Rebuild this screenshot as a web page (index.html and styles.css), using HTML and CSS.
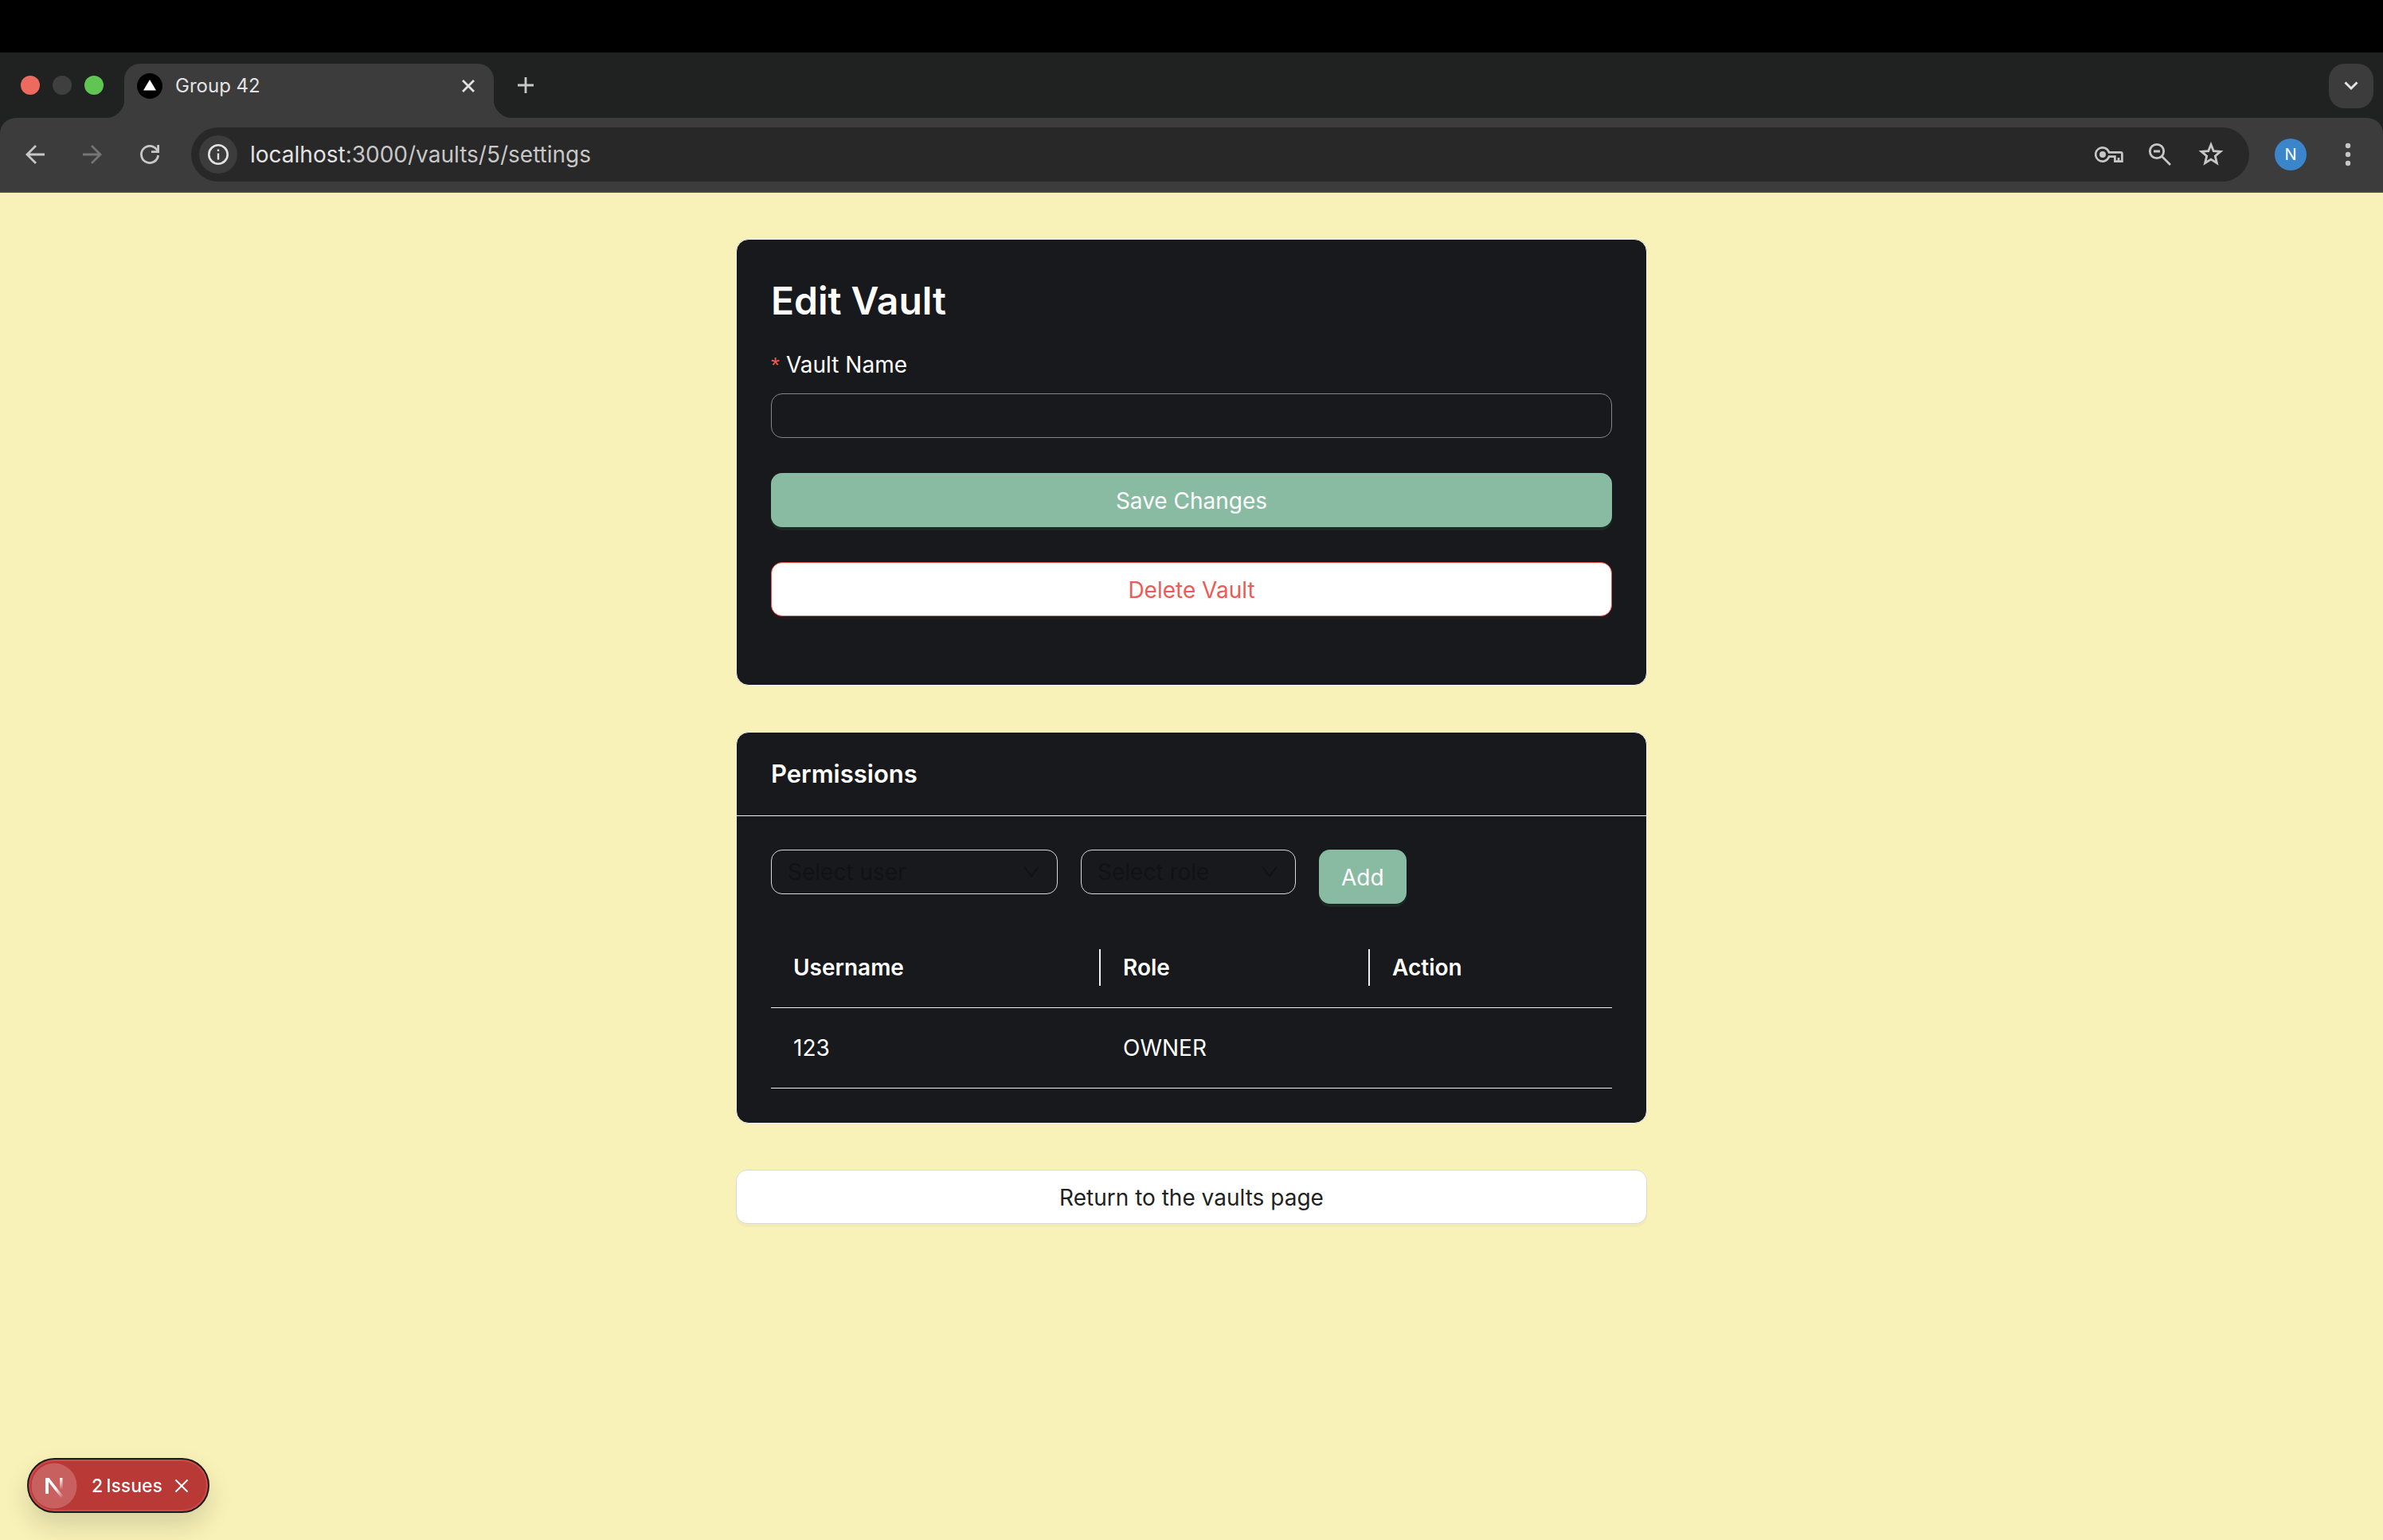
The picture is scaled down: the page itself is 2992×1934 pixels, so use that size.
FILE: index.html
```html
<!DOCTYPE html>
<html lang="en">
<head>
<meta charset="utf-8">
<title>Group 42</title>
<link rel="stylesheet" href="styles.css">
</head>
<body>
<header class="browser">
  <div class="tabstrip">
    <div class="lights"><span class="light close"></span><span class="light min"></span><span class="light max"></span></div>
    <div class="tab">
      <svg class="favicon" viewBox="0 0 32 32" aria-hidden="true"><circle cx="16" cy="16" r="16" fill="#000"/><path d="M16 8l8 13.500H8z" fill="#fff"/></svg>
      <span class="tab-title">Group 42</span>
      <button class="icon-btn" aria-label="Close tab"><svg width="16" height="16" viewBox="0 0 16 16"><path d="M1 1l14 14M15 1L1 15" stroke="#e3e3e3" stroke-width="2.800"/></svg></button>
    </div>
    <button class="icon-btn new-tab" aria-label="New tab"><svg width="20" height="20" viewBox="0 0 20 20"><path d="M10 0v20M0 10h20" stroke="#c7c7c7" stroke-width="2.800"/></svg></button>
    <button class="tab-search" aria-label="Search tabs"><svg width="18" height="12" viewBox="0 0 18 12"><path d="M1.500 1.500L9 9l7.500-7.500" fill="none" stroke="#e3e3e3" stroke-width="3"/></svg></button>
  </div>
  <nav class="toolbar">
    <button class="icon-btn nav-btn" aria-label="Back"><svg width="28" height="28" viewBox="0 0 28 28"><path d="M26 14H4M15 3L4 14l11 11" fill="none" stroke="#c7c7c7" stroke-width="2.800"/></svg></button>
    <button class="icon-btn nav-btn" aria-label="Forward"><svg width="28" height="28" viewBox="0 0 28 28"><path d="M2 14h22M13 3l11 11-11 11" fill="none" stroke="#757575" stroke-width="2.800"/></svg></button>
    <button class="icon-btn nav-btn" aria-label="Reload"><svg width="28" height="28" viewBox="0 0 28 28"><path d="M24.600 15A10.600 10.600 0 1 1 22.500 7.500L25 10.600" fill="none" stroke="#c7c7c7" stroke-width="2.800"/><path d="M24.600 2v8.600H16" fill="none" stroke="#c7c7c7" stroke-width="2.800"/></svg></button>
    <div class="omnibox">
      <span class="site-info"><svg width="28" height="28" viewBox="0 0 28 28"><circle cx="14" cy="14" r="11.700" fill="none" stroke="#e3e3e3" stroke-width="2.600"/><path d="M14 12.500v8M14 7.500v2.600" stroke="#e3e3e3" stroke-width="2.400"/></svg></span>
      <span class="url"><span class="host">localhost</span>:3000/vaults/5/settings</span>
      <button class="icon-btn key" aria-label="Passwords"><svg width="36" height="28" viewBox="0 0 36 28"><path d="M18 11.400A8.600 8.600 0 1 0 18 16.600h7.400v6h9V13a1.600 1.600 0 0 0-1.600-1.600zM30 23v-5" fill="none" stroke="#c7c7c7" stroke-width="2.700"/><circle cx="10" cy="14" r="4" fill="#c7c7c7"/></svg></button>
      <button class="icon-btn" aria-label="Zoom"><svg width="32" height="32" viewBox="0 0 32 32"><circle cx="12" cy="12" r="8.700" fill="none" stroke="#c7c7c7" stroke-width="2.800"/><path d="M8 12h8M18 18l11 11" stroke="#c7c7c7" stroke-width="2.800"/></svg></button>
      <button class="icon-btn" aria-label="Bookmark"><svg width="32" height="32" viewBox="0 0 32 32"><path d="M16 3.600l3.200 8 8.800.7-6.700 5.700 2.100 8.700L16 22.100l-7.400 4.600L10.700 18 4 12.300l8.800-.7z" fill="none" stroke="#c7c7c7" stroke-width="2.800"/></svg></button>
    </div>
    <span class="avatar">N</span>
    <button class="icon-btn" aria-label="Menu"><svg width="8" height="32" viewBox="0 0 8 32"><g fill="#c7c7c7"><circle cx="4" cy="5" r="3.200"/><circle cx="4" cy="16" r="3.200"/><circle cx="4" cy="27" r="3.200"/></g></svg></button>
  </nav>
</header>
<main class="page">
  <section class="card edit">
    <h1>Edit Vault</h1>
    <form>
      <label for="name"><span class="star">*</span>Vault Name</label>
      <input id="name" type="text" class="field">
      <button type="button" class="btn primary">Save Changes</button>
      <button type="button" class="btn danger">Delete Vault</button>
    </form>
  </section>
  <section class="card">
    <h2>Permissions</h2>
    <div class="card-body">
      <div class="add-row">
        <div class="picker user">
          <select class="field" aria-label="User"><option>Select user</option></select>
          <svg class="arrow" width="20" height="20" viewBox="0 0 20 20"><path d="M1 3.500l9 12 9-12" fill="none" stroke="#111216" stroke-width="2"/></svg>
        </div>
        <div class="picker role">
          <select class="field" aria-label="Role"><option>Select role</option></select>
          <svg class="arrow" width="20" height="20" viewBox="0 0 20 20"><path d="M1 3.500l9 12 9-12" fill="none" stroke="#111216" stroke-width="2"/></svg>
        </div>
        <button type="button" class="btn primary add">Add</button>
      </div>
      <table>
        <colgroup><col class="c-user"><col class="c-role"><col></colgroup>
        <thead><tr><th>Username</th><th>Role</th><th>Action</th></tr></thead>
        <tbody><tr><td>123</td><td>OWNER</td><td></td></tr></tbody>
      </table>
    </div>
  </section>
  <button type="button" class="btn plain">Return to the vaults page</button>
</main>
<aside class="issues">
  <svg width="58" height="58" viewBox="0 0 58 58" aria-hidden="true">
    <defs>
      <linearGradient id="g1" gradientUnits="userSpaceOnUse" x1="30" y1="32" x2="40" y2="44"><stop stop-color="#fff"/><stop offset="1" stop-color="#fff" stop-opacity="0"/></linearGradient>
      <linearGradient id="g2" gradientUnits="userSpaceOnUse" x1="0" y1="19" x2="0" y2="34"><stop stop-color="#fff"/><stop offset="1" stop-color="#fff" stop-opacity="0"/></linearGradient>
    </defs>
    <circle cx="29" cy="29" r="28.500" fill="#c96060"/>
    <path d="M20 39V19" stroke="#fff" stroke-width="4"/>
    <path d="M18 19h4.500l18 23-3 2z" fill="url(#g1)"/>
    <path d="M36 19h3.500v17H36z" fill="url(#g2)"/>
  </svg>
  <span class="issues-text"><span>2</span><span>Issues</span></span>
  <button class="icon-btn" aria-label="Dismiss"><svg width="18" height="18" viewBox="0 0 18 18"><path d="M1.500 1.500l15 15M16.500 1.500l-15 15" stroke="#fff" stroke-width="2"/></svg></button>
</aside>
</body>
</html>
```
FILE: styles.css
```css
* { box-sizing: border-box; }
body {
  margin: 0;
  min-height: 100vh;
  background: #f8f2b8;
  color: #fff;
  font: 28px/44px Inter, "Liberation Sans", sans-serif;
}
button, input, select { font: inherit; color: inherit; }
svg { display: block; }
.icon-btn { display: flex; padding: 0; border: 0; background: none; }

/* browser frame */
.browser { border-top: 66px solid #000; background: #202221; }
.tabstrip { display: flex; align-items: center; height: 82px; padding: 14px 12px 0 26px; }
.lights { display: flex; gap: 16px; width: 130px; padding-bottom: 14px; }
.light { width: 24px; height: 24px; border-radius: 50%; }
.close { background: #ec6a5e; }
.min { background: #3f3f3f; }
.max { background: #61c554; }
.tab {
  position: relative;
  display: flex;
  align-items: center;
  gap: 16px;
  width: 464px;
  height: 68px;
  padding: 0 24px 12px 16px;
  border-radius: 20px 20px 0 0;
  background: #3c3c3c;
}
.tab::before, .tab::after {
  content: "";
  position: absolute;
  bottom: 0;
  width: 24px;
  height: 24px;
}
.tab::before { right: 100%; background: radial-gradient(circle at 0 0, transparent 24px, #3c3c3c 25px); }
.tab::after { left: 100%; background: radial-gradient(circle at 100% 0, transparent 24px, #3c3c3c 25px); }
.favicon { width: 32px; height: 32px; }
.tab-title { flex: 1; font-size: 24px; line-height: 32px; color: #e3e3e3; }
.new-tab { margin: 0 auto 14px 30px; }
.tab-search {
  display: flex;
  align-items: center;
  justify-content: center;
  width: 56px;
  height: 56px;
  margin-bottom: 12px;
  padding: 0;
  border: 0;
  border-radius: 20px;
  background: #3c3c3c;
}
.toolbar {
  display: flex;
  align-items: center;
  height: 94px;
  padding: 0 40px 0 30px;
  border-bottom: 2px solid #474747;
  border-radius: 20px 20px 0 0;
  background: #3c3c3c;
}
.nav-btn { margin-right: 44px; }
.nav-btn:nth-child(3) { margin-right: 38px; }
.omnibox {
  flex: 1;
  display: flex;
  align-items: center;
  gap: 32px;
  height: 68px;
  padding: 0 32px 0 10px;
  border-radius: 34px;
  background: #282828;
}
.site-info {
  display: flex;
  align-items: center;
  justify-content: center;
  width: 48px;
  height: 48px;
  border-radius: 50%;
  background: #3c3c3c;
}
.url { flex: 1; margin-left: -16px; color: #c7c7c7; }
.host { color: #e3e3e3; }
.key { margin-right: -2px; }
.avatar {
  width: 40px;
  height: 40px;
  margin: 0 48px 0 32px;
  border-radius: 50%;
  background: #3b86cb;
  font-size: 20px;
  line-height: 40px;
  text-align: center;
}

/* settings page */
.page {
  display: flex;
  flex-direction: column;
  gap: 58px;
  max-width: 1144px;
  margin: 0 auto;
  padding: 58px 0;
}
.card {
  overflow: hidden;
  border: 1px solid #f0f0f0;
  border-radius: 16px;
  background: #18191d;
}
.edit { padding: 44px 43px 86px; }
h1 { margin: 0 0 25px; font-size: 48px; line-height: 66px; font-weight: 600; }
h2 { margin: 0; padding: 30px 43px; border-bottom: 1px solid #f0f0f0; font-size: 31px; line-height: 44px; font-weight: 600; }
form { display: flex; flex-direction: column; }
label { height: 44px; margin-bottom: 14px; }
.star { margin-right: 8px; color: #ec5b56; font-family: "Liberation Sans", sans-serif; line-height: 1; }
.field {
  width: 100%;
  height: 56px;
  padding: 0 20px;
  border: 1px solid #86868a;
  border-radius: 14px;
  background: transparent;
}
form .field { margin-bottom: 44px; }
.btn {
  height: 68px;
  padding: 2px 28px 0;
  border: 1px solid #d9d9d9;
  border-radius: 14px;
}
.primary { border: 0; background: #88bba1; box-shadow: 0 4px 0 #1e2925; }
.danger { margin-top: 44px; border-color: #ec5b56; background: #fff; color: #ec5b56; box-shadow: 0 4px 0 #25181c; }
.plain { background: #fff; color: #222; box-shadow: 0 4px 0 #f3ebb4; }
.card-body { padding: 42px 43px 43px; }
.add-row { display: flex; align-items: flex-start; gap: 29px; margin-bottom: 30px; }
.picker { position: relative; }
.user { width: 360px; }
.role { width: 270px; }
.picker .field { display: block; appearance: none; border-color: #d9d9d9; color: #111216; }
.arrow { position: absolute; top: 18px; right: 23px; pointer-events: none; }
table { width: 100%; border-collapse: separate; border-spacing: 0; table-layout: fixed; }
.c-user { width: 414px; }
.c-role { width: 338px; }
th, td { position: relative; height: 101px; padding: 28px; border-bottom: 1px solid #f0f0f0; text-align: left; }
th { font-weight: 600; }
th:not(:last-child)::after {
  content: "";
  position: absolute;
  top: 27px;
  right: 0;
  width: 2px;
  height: 46px;
  background: #f0f0f0;
}

/* floating error badge */
.issues {
  position: fixed;
  left: 34px;
  bottom: 34px;
  display: flex;
  align-items: center;
  width: 229px;
  height: 69px;
  padding: 0 24px 0 3px;
  border: 2px solid #1c1c1c;
  border-radius: 35px;
  background: #b93936;
  box-shadow: inset 0 0 0 2px #cf4a49, 0 16px 32px rgba(0, 0, 0, 0.14);
  font-size: 23px;
  line-height: 32px;
}
.issues-text { display: flex; flex: 1; gap: 4px; margin-left: 18px; font-weight: 500; }
```
